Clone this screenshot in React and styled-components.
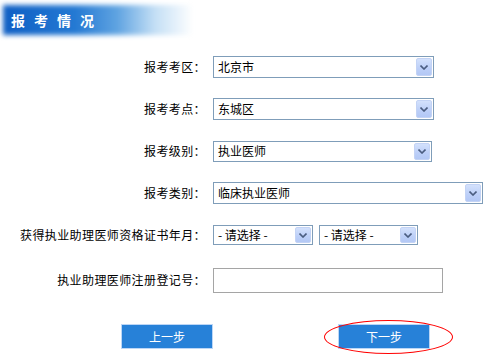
import React from 'react';
import styled, { createGlobalStyle } from 'styled-components';

const GlobalStyle = createGlobalStyle`
  body {
    margin: 0;
    background: #fff;
    font-family: "Noto Sans CJK SC", "Liberation Sans", sans-serif;
    font-size: 12px;
    color: #000;
  }
`;

const Page = styled.div`
  width: 500px;
  height: 364px;
  position: relative;
  overflow: hidden;
`;

const Banner = styled.div`
  position: relative;
  width: 192px;
  height: 36px;
  margin: 2px 0 0 1px;
  display: flex;
  align-items: center;
  padding-left: 10px;
  box-sizing: border-box;

  &::before {
    content: '';
    position: absolute;
    inset: 3px 0 3px 2px;
    background: linear-gradient(90deg, #0f5fc4 0%, #2479d3 38%, #5fa3e1 60%, #c4dff5 80%, #ffffff 100%);
    filter: blur(2.5px);
  }
`;

const BannerTitle = styled.span`
  position: relative;
  color: #fff;
  font-weight: bold;
  font-size: 14px;
  letter-spacing: 9px;
  line-height: 1;
`;

const Form = styled.div`
  display: grid;
  grid-template-columns: 206px 1fr;
  column-gap: 7px;
  grid-auto-rows: 42px;
  align-items: center;
  margin-top: 8px;
`;

const Label = styled.div`
  text-align: right;
  white-space: nowrap;
  line-height: 14px;
  letter-spacing: 0.4px;
  margin-top: ${p => p.$shift || 0}px;
`;

const Controls = styled.div`
  display: flex;
  gap: 6px;
  margin-top: ${p => p.$shift || 0}px;
`;

const SelectBox = styled.div`
  width: ${p => p.$w}px;
  height: ${p => p.$h || 22}px;
  box-sizing: border-box;
  border: 1px solid #7f9db9;
  background: #fff;
  display: flex;
  align-items: center;
  justify-content: space-between;
  padding: 0 1px 0 4px;
  line-height: 1;
`;

const ArrowBox = styled.div`
  width: 16px;
  height: ${p => p.$h}px;
  box-sizing: border-box;
  border: 1px solid #c3d3f5;
  border-radius: 2px;
  background: linear-gradient(180deg, #d3e1fc 0%, #bccff8 60%, #b3c8f5 100%);
  display: flex;
  align-items: center;
  justify-content: center;
`;

const TextInput = styled.div`
  width: 230px;
  height: 25px;
  box-sizing: border-box;
  border: 1px solid #a5a5a5;
  background: #fff;
`;

const ButtonBar = styled.div`
  display: flex;
  gap: 125px;
  padding-left: 121px;
  margin-top: 26px;
`;

const ButtonWrap = styled.div`
  position: relative;
`;

const Button = styled.div`
  width: 92px;
  height: 25px;
  box-sizing: border-box;
  border: 1px solid #bcd6f6;
  background: #2781d8;
  color: #fff;
  display: flex;
  align-items: center;
  justify-content: center;
  font-size: 12px;
`;

const Ellipse = styled.div`
  position: absolute;
  left: -14px;
  top: -4px;
  width: 129px;
  height: 34px;
  box-sizing: border-box;
  border: 1px solid #f00;
  border-radius: 50%;
  pointer-events: none;
`;

function Chevron() {
  return (
    <svg width="8" height="5" viewBox="0 0 8 5">
      <path d="M0.5 0.5 L4 4 L7.5 0.5" fill="none" stroke="#4a5d80" strokeWidth="1.6" />
    </svg>
  );
}

function Select({ value, width, height = 22 }) {
  return (
    <SelectBox $w={width} $h={height}>
      <span>{value}</span>
      <ArrowBox $h={height - 4}>
        <Chevron />
      </ArrowBox>
    </SelectBox>
  );
}

const rows = [
  { label: '报考考区：', selects: [{ value: '北京市', width: 221 }] },
  { label: '报考考点：', selects: [{ value: '东城区', width: 221 }] },
  { label: '报考级别：', selects: [{ value: '执业医师', width: 219, height: 21 }] },
  { label: '报考类别：', selects: [{ value: '临床执业医师', width: 270 }] },
  {
    label: '获得执业助理医师资格证书年月：',
    selects: [
      { value: '- 请选择 -', width: 100, height: 20 },
      { value: '- 请选择 -', width: 99, height: 20 },
    ],
  },
];

export default function App() {
  return (
    <Page>
      <GlobalStyle />
      <Banner>
        <BannerTitle>报考情况</BannerTitle>
      </Banner>
      <Form>
        {rows.map((row) => (
          <React.Fragment key={row.label}>
            <Label>{row.label}</Label>
            <Controls>
              {row.selects.map((s, i) => (
                <Select key={i} value={s.value} width={s.width} height={s.height} />
              ))}
            </Controls>
          </React.Fragment>
        ))}
        <Label $shift={6}>执业助理医师注册登记号：</Label>
        <Controls $shift={6}>
          <TextInput />
        </Controls>
      </Form>
      <ButtonBar>
        <ButtonWrap>
          <Button>上一步</Button>
        </ButtonWrap>
        <ButtonWrap>
          <Button>下一步</Button>
          <Ellipse />
        </ButtonWrap>
      </ButtonBar>
    </Page>
  );
}
